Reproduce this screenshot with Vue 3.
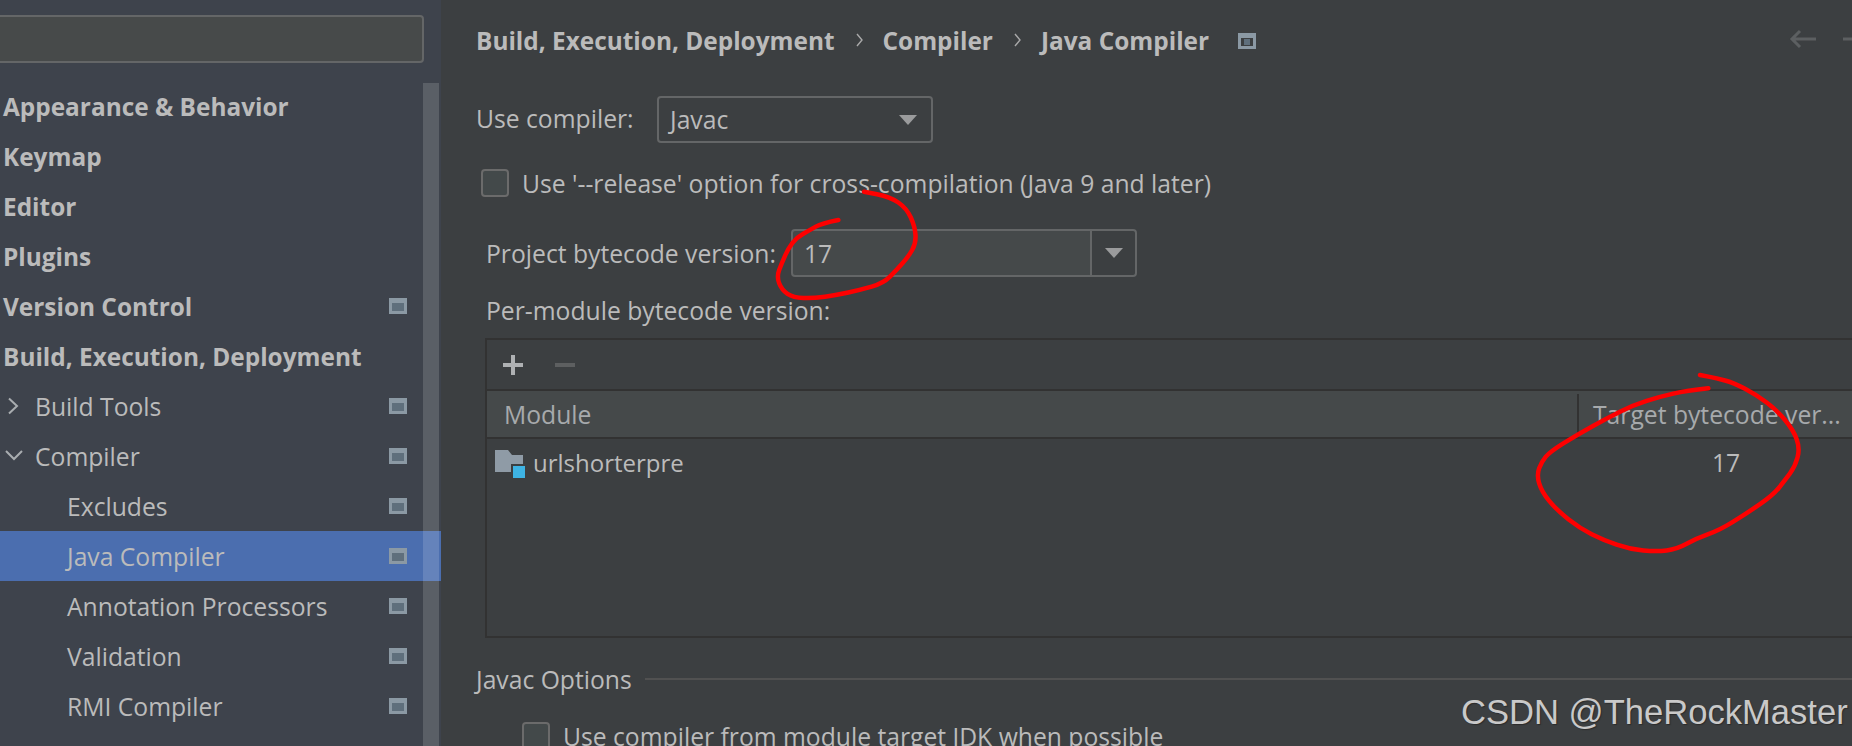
<script setup>
const rows = [
  { label: 'Appearance & Behavior', level: 0 },
  { label: 'Keymap', level: 0 },
  { label: 'Editor', level: 0 },
  { label: 'Plugins', level: 0 },
  { label: 'Version Control', level: 0, scoped: true },
  { label: 'Build, Execution, Deployment', level: 0 },
  { label: 'Build Tools', level: 1, arrow: 'right', scoped: true },
  { label: 'Compiler', level: 1, arrow: 'down', scoped: true },
  { label: 'Excludes', level: 2, scoped: true },
  { label: 'Java Compiler', level: 2, scoped: true, selected: true },
  { label: 'Annotation Processors', level: 2, scoped: true },
  { label: 'Validation', level: 2, scoped: true },
  { label: 'RMI Compiler', level: 2, scoped: true },
]

const smooth = (pts) => {
  let d = `M${pts[0][0]} ${pts[0][1]}`
  for (let i = 1; i < pts.length - 1; i++) {
    const mx = (pts[i][0] + pts[i + 1][0]) / 2
    const my = (pts[i][1] + pts[i + 1][1]) / 2
    d += ` Q${pts[i][0]} ${pts[i][1]} ${mx} ${my}`
  }
  const l = pts[pts.length - 1]
  return d + ` L${l[0]} ${l[1]}`
}

const z1 = [[1135,660],[1085,670],[1050,690],[1010,712],[985,745],[965,790],[950,830],[965,870],[1000,893],[1060,895],[1130,885],[1200,870],[1270,850],[1310,810],[1345,770],[1368,730],[1365,680],[1340,625],[1290,590],[1212,575]]
const z2 = [[625,85],[560,92],[480,110],[400,135],[320,175],[230,225],[150,275],[125,305],[110,345],[125,395],[170,450],[240,505],[310,540],[390,568],[470,575],[530,568],[590,535],[660,510],[740,460],[820,405],[855,360],[885,320],[900,265],[880,210],[830,150],[770,105],[700,68],[650,55],[600,45]]
const circleOne = smooth(z1.map(([x, y]) => [x / 3 + 460, y / 3]))
const circleTwo = smooth(z2.map(([x, y]) => [x / 3 + 1500, y / 3 + 360]))
</script>

<template>
  <div class="page">
    <aside class="sidebar">
      <div class="search"></div>
      <ul class="tree">
        <li
          v-for="row in rows"
          :key="row.label"
          class="row"
          :class="[`level-${row.level}`, { selected: row.selected }]"
        >
          <svg v-if="row.arrow === 'right'" class="arrow" width="14" height="18" viewBox="0 0 14 18">
            <path d="M2 1.5 L10 9 L2 16.5" fill="none" stroke="#a9adb0" stroke-width="2" />
          </svg>
          <svg v-if="row.arrow === 'down'" class="arrow down" width="18" height="14" viewBox="0 0 18 14">
            <path d="M1 2 L9 10 L17 2" fill="none" stroke="#a9adb0" stroke-width="2" />
          </svg>
          <span class="row-label">{{ row.label }}</span>
          <svg v-if="row.scoped" class="scope" width="18" height="16" viewBox="0 0 18 16">
            <rect width="18" height="16" fill="#8b99a4" />
            <rect x="3" y="5" width="12" height="8" fill="#5f6f7c" />
          </svg>
        </li>
      </ul>
      <div class="scrollbar"></div>
    </aside>

    <main class="content">
      <header class="crumbs">
        <span>Build, Execution, Deployment</span>
        <svg class="sep" width="8" height="14" viewBox="0 0 8 14"><path d="M1 1 L6 7 L1 13" fill="none" stroke="#a9a9a9" stroke-width="1.4" /></svg>
        <span>Compiler</span>
        <svg class="sep" width="8" height="14" viewBox="0 0 8 14"><path d="M1 1 L6 7 L1 13" fill="none" stroke="#a9a9a9" stroke-width="1.4" /></svg>
        <span>Java Compiler</span>
        <svg class="crumb-scope" width="18" height="16" viewBox="0 0 18 16">
          <rect width="18" height="16" fill="#8b99a4" />
          <rect x="3" y="5" width="12" height="8" fill="#3c3f41" />
          <rect x="6" y="6" width="6" height="6" fill="#5f6f7c" />
        </svg>
        <div class="nav">
          <svg width="27" height="20" viewBox="0 0 27 20"><path d="M27 10 H3 M11 2 L3 10 L11 18" fill="none" stroke="#5c5f61" stroke-width="3" /></svg>
          <svg width="27" height="20" viewBox="0 0 27 20"><path d="M0 10 H24" fill="none" stroke="#5c5f61" stroke-width="3" /></svg>
        </div>
      </header>

      <div class="compiler-line">
        <label class="compiler-label">Use compiler:</label>
        <div class="select">
          <span>Javac</span>
          <i class="tri"></i>
        </div>
      </div>

      <div class="check-line">
        <span class="checkbox"></span>
        <span>Use '--release' option for cross-compilation (Java 9 and later)</span>
      </div>

      <div class="bytecode-line">
        <label>Project bytecode version:</label>
        <div class="editable">
          <span class="editable-value">17</span>
          <span class="editable-btn"><i class="tri"></i></span>
        </div>
      </div>

      <div class="per-module">Per-module bytecode version:</div>

      <section class="table">
        <div class="toolbar">
          <svg width="20" height="20" viewBox="0 0 20 20"><path d="M10 0 V20 M0 10 H20" stroke="#afb1b3" stroke-width="4" /></svg>
          <svg class="minus" width="20" height="20" viewBox="0 0 20 20"><path d="M0 10 H20" stroke="#5d5f60" stroke-width="4" /></svg>
        </div>
        <div class="thead">
          <div class="col-module">Module</div>
          <div class="col-target">Target bytecode ver...</div>
        </div>
        <div class="tbody-row">
          <div class="col-module cell">
            <span class="module-icon">
              <svg width="30" height="28" viewBox="0 0 30 28">
                <path d="M0 0 H13 L17 5 H28 V22 H0 Z" fill="#8f9ba6" />
                <rect x="16" y="14" width="14" height="14" fill="#3c3f41" />
                <rect x="18" y="16" width="12" height="12" fill="#3eb4e4" />
              </svg>
            </span>
            <span>urlshorterpre</span>
          </div>
          <div class="col-target cell-value">17</div>
        </div>
      </section>

      <div class="options-title">
        <span>Javac Options</span>
        <i></i>
      </div>

      <div class="option-line">
        <span class="checkbox"></span>
        <span>Use compiler from module target JDK when possible</span>
      </div>
    </main>

    <svg class="ink" width="1852" height="746" viewBox="0 0 1852 746">
      <path :d="circleOne" />
      <path :d="circleTwo" />
    </svg>
    <div class="watermark">CSDN @TheRockMaster</div>
  </div>
</template>

<style>
html, body { margin: 0; background: #3c3f41; overflow: hidden; }
</style>

<style scoped>
.page {
  position: relative;
  display: flex;
  width: 1852px;
  height: 746px;
  overflow: hidden;
  background: #3c3f41;
  color: #bbbbbb;
  font-family: "Open Sans", "Noto Sans", sans-serif;
  font-size: 24.7px;
}
.sidebar {
  position: relative;
  flex: 0 0 441px;
  box-sizing: border-box;
  padding-top: 15px;
  background: #3e434c;
}
.search {
  box-sizing: border-box;
  width: 440px;
  height: 48px;
  margin-left: -16px;
  background: #474a4a;
  border: 2px solid #646667;
  border-radius: 4px;
}
.tree {
  list-style: none;
  margin: 18px 0 0;
  padding: 0;
}
.row {
  position: relative;
  display: flex;
  align-items: center;
  height: 50px;
  padding-right: 34px;
}
.level-0 { padding-left: 3px; font-weight: 700; font-size: 24.4px; }
.level-1 { padding-left: 35px; }
.level-2 { padding-left: 67px; }
.selected { background: #4b6eaf; }
.arrow { position: absolute; left: 7px; top: 16px; }
.arrow.down { left: 5px; top: 18px; }
.scope { margin-left: auto; }
.scrollbar {
  position: absolute;
  left: 423px;
  top: 83px;
  width: 16px;
  bottom: 0;
  background: rgba(255, 255, 255, 0.15);
}
.content {
  flex: 1;
  min-width: 0;
  padding-left: 35px;
}
.crumbs {
  display: flex;
  align-items: center;
  height: 40px;
  margin-top: 20px;
  font-weight: 700;
  font-size: 24.4px;
}
.sep { margin: 0 19px 0 21px; }
.crumb-scope { margin-left: 29px; margin-top: 2px; }
.nav {
  position: absolute;
  left: 1789px;
  top: 29px;
  display: flex;
  gap: 27px;
}
.compiler-line {
  display: flex;
  align-items: center;
  margin-top: 36px;
  height: 47px;
}
.compiler-label { flex: 0 0 181px; margin-top: -2px; }
.select {
  position: relative;
  box-sizing: border-box;
  display: flex;
  align-items: center;
  justify-content: space-between;
  width: 276px;
  height: 47px;
  padding: 0 14px 0 11px;
  border: 2px solid #646667;
  border-radius: 4px;
}
.tri {
  display: block;
  width: 0;
  height: 0;
  border-left: 9px solid transparent;
  border-right: 9px solid transparent;
  border-top: 10px solid #9a9b9c;
}
.check-line {
  display: flex;
  align-items: center;
  height: 30px;
  margin-top: 25px;
  padding-left: 5px;
}
.checkbox {
  flex: none;
  box-sizing: border-box;
  width: 28px;
  height: 28px;
  margin-right: 13px;
  background: #43494a;
  border: 2px solid #6b6b6b;
  border-radius: 4px;
}
.bytecode-line {
  display: flex;
  align-items: center;
  height: 48px;
  margin-top: 31px;
  padding-left: 10px;
}
.editable {
  box-sizing: border-box;
  display: flex;
  width: 346px;
  height: 48px;
  margin-left: auto;
  margin-right: 715px;
  background: #45494a;
  border: 2px solid #646667;
  border-radius: 4px;
}
.editable-value {
  flex: 1;
  align-self: center;
  padding-left: 11px;
}
.editable-btn {
  display: flex;
  align-items: center;
  justify-content: center;
  width: 43px;
  border-left: 2px solid #646667;
  background: #3c3f41;
  border-radius: 0 3px 3px 0;
}
.per-module {
  height: 30px;
  line-height: 30px;
  margin-top: 19px;
  padding-left: 10px;
}
.table {
  box-sizing: border-box;
  height: 300px;
  margin-top: 12px;
  margin-left: 9px;
  margin-right: -4px;
  border: 2px solid #323232;
}
.toolbar {
  display: flex;
  align-items: center;
  height: 49px;
  padding-left: 16px;
  box-sizing: border-box;
}
.minus { margin-left: 32px; }
.thead {
  display: flex;
  height: 50px;
  box-sizing: border-box;
  background: #45494a;
  border-top: 2px solid #323232;
  border-bottom: 2px solid #323232;
  color: #a7aaac;
}
.col-module {
  flex: 0 0 1090px;
  box-sizing: border-box;
  display: flex;
  align-items: center;
  padding-left: 17px;
}
.col-target {
  flex: 1;
  display: flex;
  align-items: center;
  padding-left: 14px;
  white-space: nowrap;
  border-left: 2px solid #323232;
  margin: 3px 0;
}
.tbody-row { display: flex; height: 46px; align-items: center; }
.col-module.cell { padding-left: 8px; color: #bbbbbb; font-size: 24px; }
.module-icon { display: flex; width: 38px; margin-top: 3px; }
.cell-value { border-left: 0; padding-left: 135px; }
.options-title {
  display: flex;
  align-items: center;
  height: 30px;
  margin-top: 26px;
}
.options-title i {
  flex: 1;
  height: 2px;
  margin-left: 13px;
  background: #515151;
}
.option-line {
  display: flex;
  align-items: center;
  margin-top: 27px;
  padding-left: 46px;
  height: 30px;
}
.ink {
  position: absolute;
  left: 0;
  top: 0;
  pointer-events: none;
}
.ink path {
  fill: none;
  stroke: #fe0000;
  stroke-width: 4.5;
  stroke-linecap: round;
  stroke-linejoin: round;
}
.watermark {
  position: absolute;
  left: 1461px;
  top: 693px;
  font-family: "Liberation Sans", Arial, sans-serif;
  font-size: 34.6px;
  line-height: 38px;
  color: #c9c9c9;
  white-space: nowrap;
  text-shadow: 1px 1px 1px #2c2c2c;
}
</style>
